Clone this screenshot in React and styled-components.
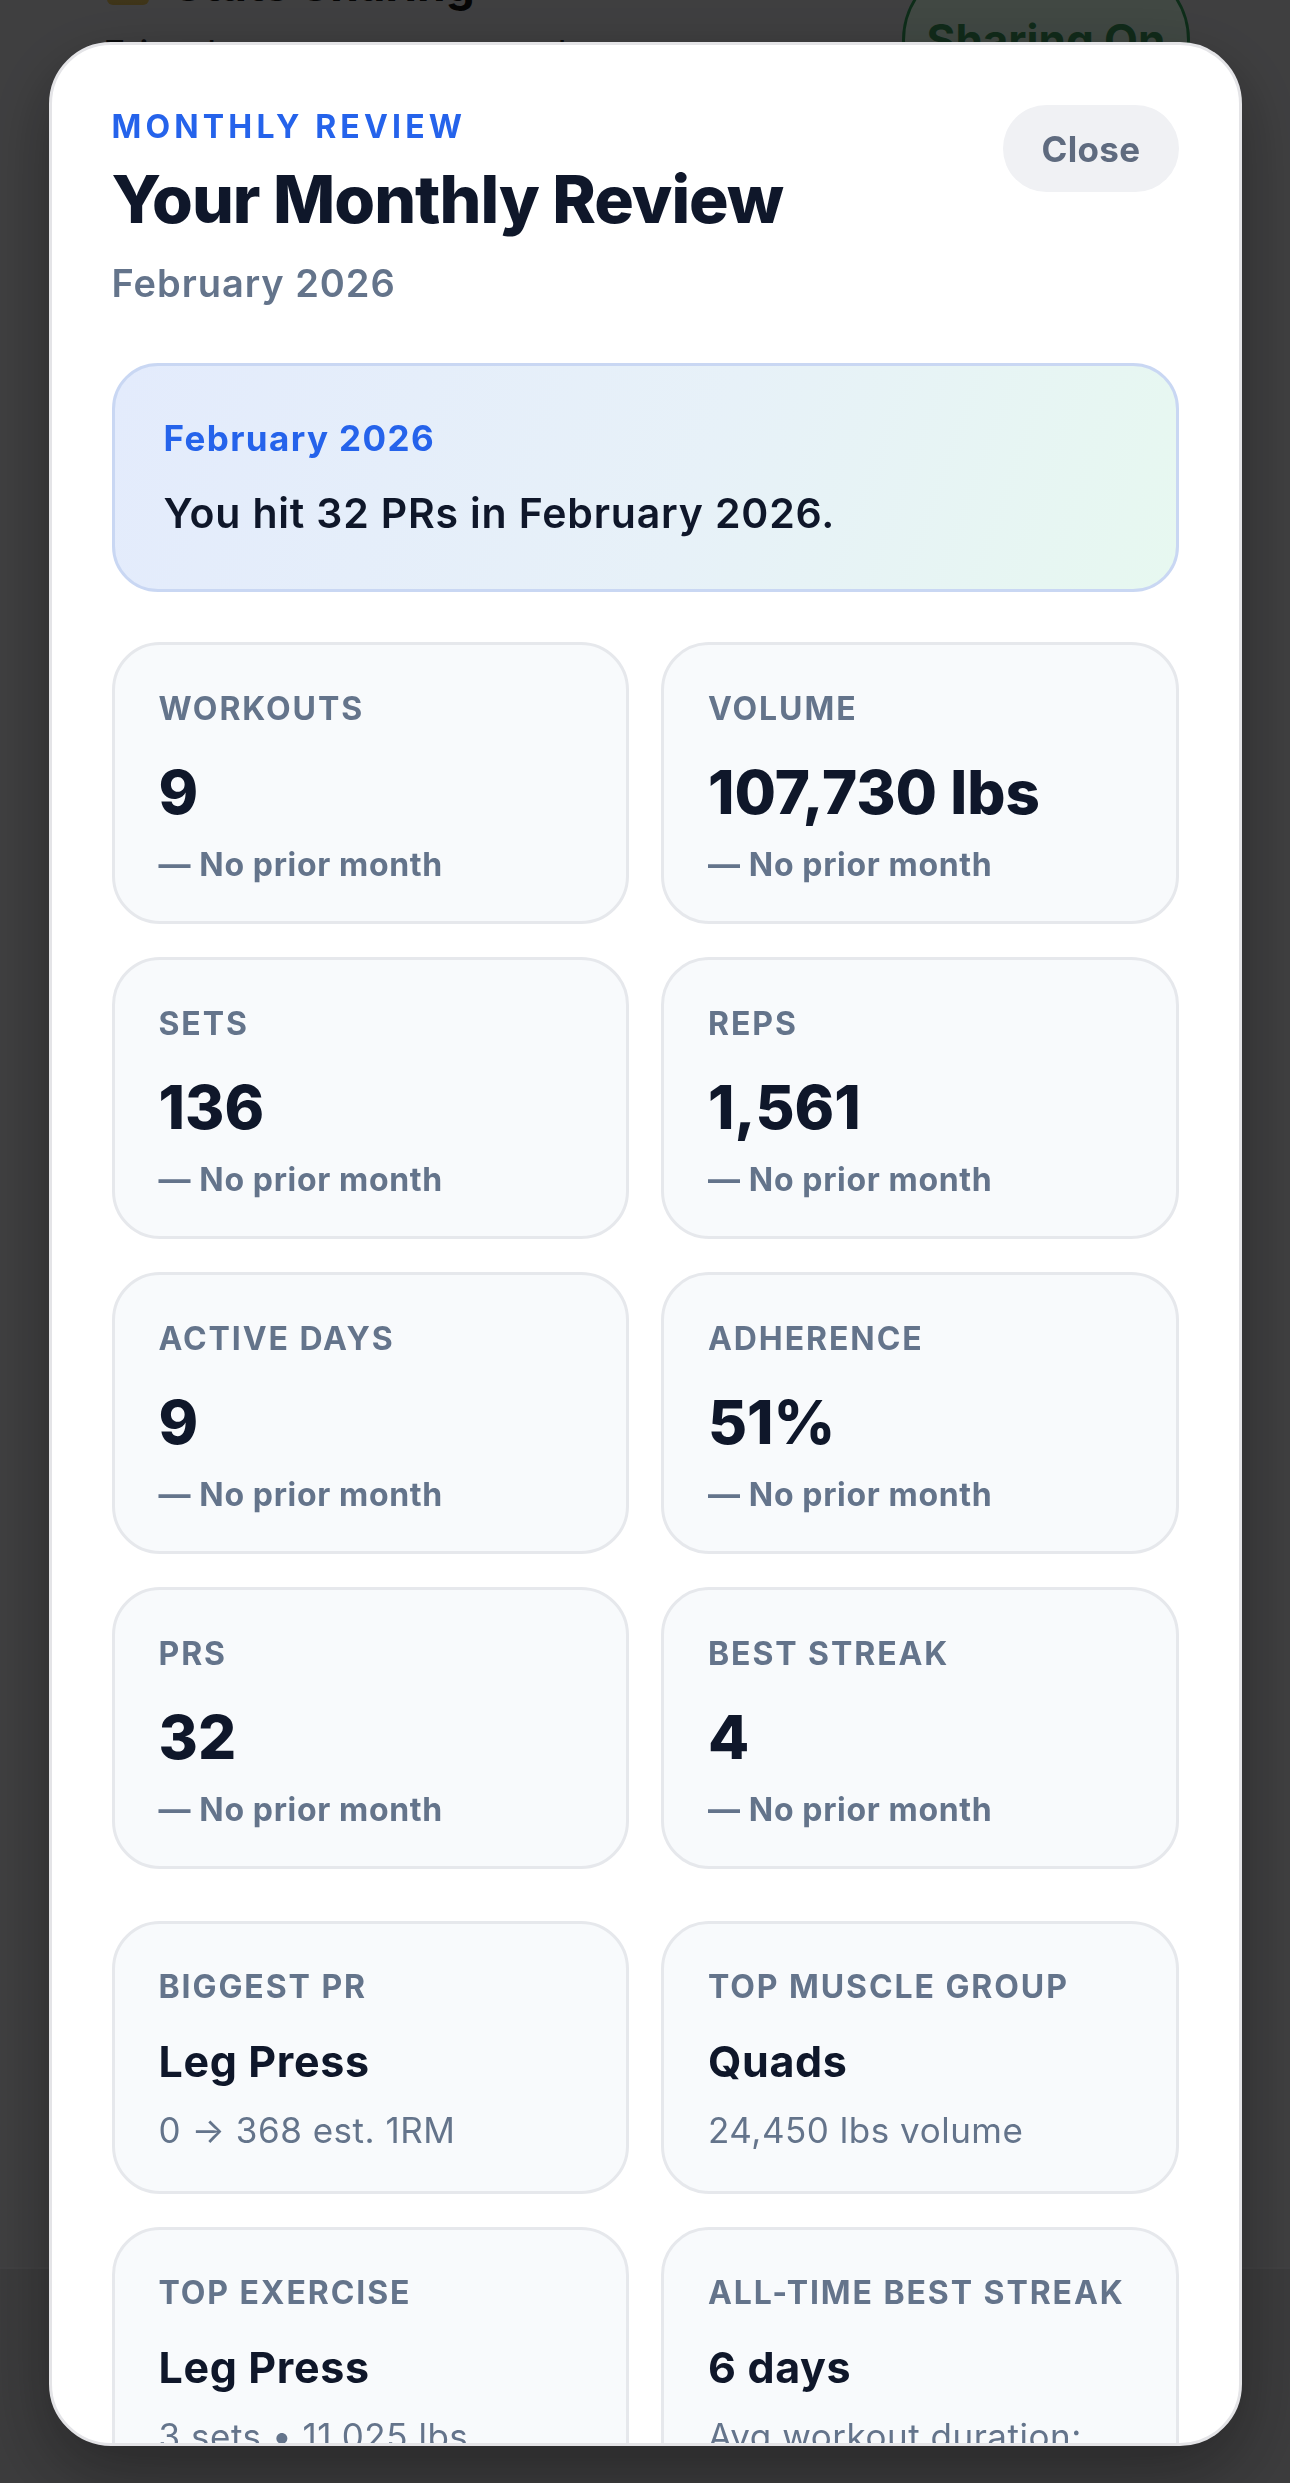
import React from "react";
import styled, { createGlobalStyle } from "styled-components";

const GlobalStyle = createGlobalStyle`
  html, body {
    margin: 0;
    padding: 0;
  }
  body {
    font-family: Inter, "Noto Sans", "Liberation Sans", sans-serif;
    -webkit-font-smoothing: antialiased;
  }
  * { box-sizing: border-box; }
`;

/* ---------- underlying page (behind the dim overlay) ---------- */

const Page = styled.div`
  position: relative;
  height: 2483px;
  overflow: hidden;
  background: #d4d4d8;
  display: flex;
  flex-direction: column;
`;

const UnderSection = styled.section`
  margin-top: -44px;
  padding: 0 100px 0 103px;
  display: flex;
  align-items: flex-start;
  justify-content: space-between;
`;

const UnderText = styled.div`
  display: flex;
  flex-direction: column;
`;

const UnderTitle = styled.div`
  display: flex;
  align-items: center;
  gap: 24px;
  font-size: 46px;
  line-height: 56px;
  font-weight: 700;
  color: #111111;
`;

const UnderIcon = styled.span`
  width: 42px;
  height: 42px;
  border-radius: 6px;
  background: linear-gradient(180deg, #f2d46a, #cfae52);
  margin-left: 4px;
`;

const UnderDesc = styled.div`
  margin-top: 18px;
  font-size: 38px;
  line-height: 48px;
  color: #1e2126;
`;

const UnderToggle = styled.div`
  margin-top: 6px;
  width: 288px;
  height: 156px;
  border-radius: 999px;
  border: 3px solid #2f9655;
  background: #d9f2e1;
  color: #3a8f57;
  font-size: 44px;
  font-weight: 700;
  display: flex;
  align-items: center;
  justify-content: center;
`;

const UnderTabBar = styled.nav`
  margin-top: auto;
  height: 216px;
  background: #c8c8cc;
  border-top: 2px solid #dadade;
`;

/* ---------- overlay + modal ---------- */

const Overlay = styled.div`
  position: fixed;
  inset: 0;
  background: rgba(0, 0, 0, 0.7);
  display: flex;
  justify-content: center;
  align-items: flex-start;
  padding-top: 42px;
`;

const Modal = styled.div`
  width: 1193px;
  height: 2404px;
  background: #ffffff;
  border: 3px solid #e4e4e7;
  border-radius: 62px;
  overflow: hidden;
  box-shadow: 0 24px 70px rgba(0, 0, 0, 0.35);
`;

const Scroll = styled.div`
  height: 100%;
  overflow-y: auto;
  scrollbar-width: none;
  padding: 60px 60px 80px;
  &::-webkit-scrollbar { display: none; }
`;

const Header = styled.header`
  display: flex;
  justify-content: space-between;
  align-items: flex-start;
`;

const HeaderText = styled.div`
  display: flex;
  flex-direction: column;
`;

const Eyebrow = styled.div`
  font-size: 32px;
  line-height: 44px;
  font-weight: 700;
  letter-spacing: 0.13em;
  text-transform: uppercase;
  color: #2563eb;
`;

const Title = styled.h1`
  margin: 14px 0 0;
  font-size: 66px;
  line-height: 72px;
  font-weight: 800;
  letter-spacing: -0.015em;
  color: #0f172a;
`;

const Subtitle = styled.div`
  margin-top: 23px;
  font-size: 38px;
  line-height: 50px;
  font-weight: 600;
  letter-spacing: 0.025em;
  color: #64748b;
`;

const CloseButton = styled.button`
  height: 87px;
  padding: 0 38px;
  border: none;
  border-radius: 999px;
  background: #f0f1f4;
  color: #5f6b7f;
  font-family: inherit;
  font-size: 35px;
  font-weight: 700;
  letter-spacing: 0.01em;
  display: flex;
  align-items: center;
  cursor: pointer;
`;

const Hero = styled.section`
  margin-top: 55px;
  padding: 50px 49px;
  border: 3px solid #c9d7f3;
  border-radius: 46px;
  background: linear-gradient(110deg, #e3ebfc 0%, #e7f1f8 55%, #e7f8f0 100%);
`;

const HeroMonth = styled.div`
  font-size: 35px;
  line-height: 44px;
  font-weight: 700;
  letter-spacing: 0.04em;
  color: #2563eb;
`;

const HeroMessage = styled.div`
  margin-top: 27px;
  font-size: 41px;
  line-height: 52px;
  font-weight: 600;
  letter-spacing: 0.02em;
  color: #0f172a;
`;

const Grid = styled.div`
  margin-top: ${(p) => p.$gapTop}px;
  display: grid;
  grid-template-columns: 1fr 1fr;
  column-gap: 32px;
  row-gap: 33px;
`;

const Card = styled.div`
  background: #f8fafc;
  border: 3px solid #e6e8ec;
  border-radius: 48px;
  padding: ${(p) => (p.$highlight ? "43px 44px 39px" : "44px 44px 36px")};
  min-width: 0;
`;

const Label = styled.div`
  font-size: 32px;
  line-height: 40px;
  font-weight: 700;
  letter-spacing: 0.06em;
  text-transform: uppercase;
  color: #64748b;
  white-space: nowrap;
`;

const StatValue = styled.div`
  margin-top: 30px;
  font-size: 60px;
  line-height: 66px;
  font-weight: 800;
  letter-spacing: 0;
  color: #0f172a;
`;

const Delta = styled.div`
  margin-top: 20px;
  font-size: 32px;
  line-height: 40px;
  font-weight: 700;
  letter-spacing: 0.02em;
  color: #64748b;
`;

const HighlightValue = styled.div`
  margin-top: 28px;
  font-size: 43px;
  line-height: 52px;
  font-weight: 700;
  letter-spacing: 0.015em;
  color: #0f172a;
`;

const HighlightSub = styled.div`
  margin-top: 21px;
  font-size: 35px;
  line-height: 44px;
  font-weight: 400;
  letter-spacing: 0.015em;
  color: #64748b;
`;

const stats = [
  { label: "Workouts", value: "9" },
  { label: "Volume", value: "107,730 lbs" },
  { label: "Sets", value: "136" },
  { label: "Reps", value: "1,561" },
  { label: "Active Days", value: "9" },
  { label: "Adherence", value: "51%" },
  { label: "PRs", value: "32" },
  { label: "Best Streak", value: "4" },
];

const highlights = [
  { label: "Biggest PR", value: "Leg Press", sub: "0 → 368 est. 1RM" },
  { label: "Top Muscle Group", value: "Quads", sub: "24,450 lbs volume" },
  { label: "Top Exercise", value: "Leg Press", sub: "3 sets • 11,025 lbs" },
  { label: "All-Time Best Streak", value: "6 days", sub: "Avg workout duration: 48\u00a0minutes" },
];

export default function App() {
  return (
    <>
      <GlobalStyle />
      <Page>
        <UnderSection aria-hidden="true">
          <UnderText>
            <UnderTitle>
              <UnderIcon />
              Stats Sharing
            </UnderTitle>
            <UnderDesc>Friends can see your workout stats</UnderDesc>
          </UnderText>
          <UnderToggle>Sharing On</UnderToggle>
        </UnderSection>
        <UnderTabBar />

        <Overlay>
          <Modal role="dialog" aria-label="Your Monthly Review">
            <Scroll>
              <Header>
                <HeaderText>
                  <Eyebrow>Monthly Review</Eyebrow>
                  <Title>Your Monthly Review</Title>
                  <Subtitle>February 2026</Subtitle>
                </HeaderText>
                <CloseButton type="button">Close</CloseButton>
              </Header>

              <Hero>
                <HeroMonth>February 2026</HeroMonth>
                <HeroMessage>You hit 32 PRs in February 2026.</HeroMessage>
              </Hero>

              <Grid $gapTop={50}>
                {stats.map((s) => (
                  <Card key={s.label}>
                    <Label>{s.label}</Label>
                    <StatValue>{s.value}</StatValue>
                    <Delta>— No prior month</Delta>
                  </Card>
                ))}
              </Grid>

              <Grid $gapTop={52}>
                {highlights.map((h) => (
                  <Card key={h.label} $highlight>
                    <Label>{h.label}</Label>
                    <HighlightValue>{h.value}</HighlightValue>
                    <HighlightSub>{h.sub}</HighlightSub>
                  </Card>
                ))}
              </Grid>
            </Scroll>
          </Modal>
        </Overlay>
      </Page>
    </>
  );
}
